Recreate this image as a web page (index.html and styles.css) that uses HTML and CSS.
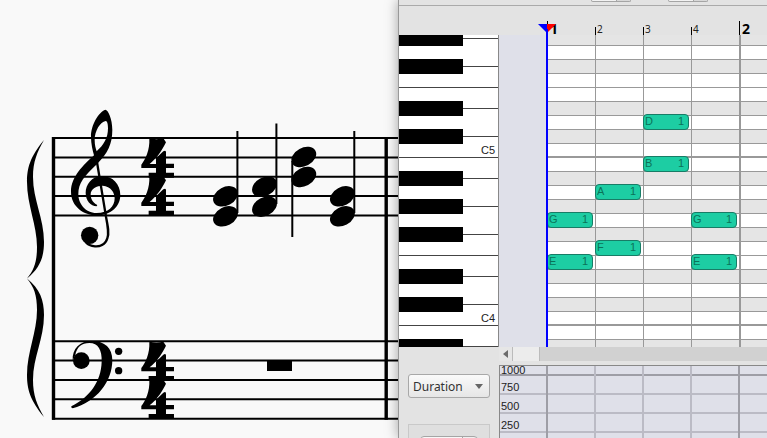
FILE: index.html
```html
<!DOCTYPE html>
<html lang="en">
<head>
  <meta charset="UTF-8" />
  <title>Score and Piano Roll</title>
  <link rel="stylesheet" href="styles.css">
</head>
<body>
  <main class="score">
    <svg class="sheet" width="399" height="438" viewBox="0 0 399 438" role="img" aria-label="Grand staff in 4/4">
      <defs>
        <path id="four" d="M448 145 Q470 150 490 145 L498 157 C490 174 474 202 449 222 H468 V205 L490 184 Q497 179 498 186 V221 H522 V234 H498 V248 H522 V263 H446 V248 H468 V234 H424 V224 C436 208 450 182 448 145 Z" />
        <ellipse id="head" rx="13.2" ry="9.2" transform="rotate(-28)" />
        <path id="half-brace" d="M44 140 C30 157 27 168 27 182 C27 205 37 225 37 247 C37 262 34 270 27 278.5 C40 268 44 257 44 242 C44 218 33 200 33 177 C33 162 37 152 44 140 Z" />
      </defs>

      <!-- staves -->
      <g stroke="#000" stroke-width="2">
        <path d="M52 138 H399 M52 157.4 H399 M52 176.7 H399 M52 196 H399 M52 215.5 H399" />
        <path d="M52 341.2 H399 M52 360.6 H399 M52 380 H399 M52 399.3 H399 M52 418.7 H399" />
      </g>
      <path d="M53.5 137 V419.7 M386.2 137 V419.7" stroke="#000" stroke-width="3.4" />

      <!-- brace -->
      <use href="#half-brace" />
      <use href="#half-brace" transform="translate(0 557) scale(1 -1)" />

      <!-- treble clef -->
      <g transform="translate(0 90) scale(.3333)">
        <path fill-rule="evenodd" d="M316 59 C297 66 273 103 273 140 C273 162 278 182 282 196 C250 226 213 260 213 305 C213 350 252 376 290 376 C335 376 361 348 361 315 C361 282 338 258 305 258 C275 258 257 285 257 308 C257 332 272 348 290 349 L292 345 C277 338 272 325 272 313 C272 297 290 287 308 287 C333 289 344 308 344 325 C344 350 325 369 290 369 C255 369 235 340 235 312 C235 280 252 258 292 221 C323 190 337 162 337 120 C337 86 324 59 316 59 Z M317 93 C301 96 284 122 284 150 C284 165 287 175 290 184 C311 165 324 145 324 115 C324 103 322 93 317 93 Z" />
        <path d="M290 210 L318 380 C324 410 328 430 322 445 C316 465 298 470 285 469 C272 468 262 462 256 455" fill="none" stroke="#000" stroke-width="7" />
        <circle cx="269" cy="436" r="26" />
      </g>

      <!-- bass clef -->
      <g transform="translate(0 250) scale(.3333)">
        <circle cx="244" cy="332" r="25" />
        <path d="M218 332 C216 295 240 273 275 273 C315 273 337 295 337 330 C337 395 290 455 218 475 Q212 473 214 469 C270 440 303 395 305 335 C306 300 295 279 268 279 C245 279 230 292 226 315 Z" />
        <circle cx="356" cy="304" r="11" />
        <circle cx="356" cy="362" r="11" />
      </g>

      <!-- time signatures -->
      <g transform="translate(0 90) scale(.3333)">
        <use href="#four" />
        <use href="#four" y="114" />
        <use href="#four" y="610" />
        <use href="#four" y="724" />
      </g>

      <!-- chords -->
      <use href="#head" transform="translate(225.5 196.3)" />
      <use href="#head" transform="translate(225.5 216.3)" />
      <use href="#head" transform="translate(264.5 186.7)" />
      <use href="#head" transform="translate(264.5 206.7)" />
      <use href="#head" transform="translate(303.8 157)" />
      <use href="#head" transform="translate(303.8 177)" />
      <use href="#head" transform="translate(342.4 196.3)" />
      <use href="#head" transform="translate(342.4 216.3)" />
      <path d="M237.4 131 V213 M276.4 123.5 V204 M292.3 161 V237 M354.3 131 V213" stroke="#000" stroke-width="2" />

      <!-- whole rest -->
      <rect x="267" y="360.5" width="25" height="10.5" />
    </svg>
  </main>

  <section class="editor">
    <div class="toolbar">
      <button class="tool" aria-label="Velocity"></button>
      <button class="tool" aria-label="Tick"></button>
    </div>

    <div class="ruler">
      <div class="beat bar">1</div>
      <div class="beat">2</div>
      <div class="beat">3</div>
      <div class="beat">4</div>
      <div class="beat bar">2</div>
      <svg class="marker" width="18" height="14" viewBox="0 0 18 14">
        <path d="M0 3 H9 V12 Z" fill="#00f" />
        <path d="M18 3 H9 V12 Z" fill="#f00" />
        <path d="M9 8 V14" stroke="#00f" stroke-width="2" />
      </svg>
    </div>

    <div class="roll">
      <div class="keyboard">
        <div class="key cut sharp"></div>
        <div class="key wide sharp"></div>
        <div class="key"></div>
        <div class="key sharp"></div>
        <div class="key wide sharp"></div>
        <div class="key">C5</div>
        <div class="key sharp"></div>
        <div class="key wide sharp"></div>
        <div class="key wide sharp"></div>
        <div class="key"></div>
        <div class="key sharp"></div>
        <div class="key wide sharp"></div>
        <div class="key">C4</div>
        <div class="key sharp"></div>
      </div>
      <div class="margin"></div>
      <div class="grid">
        <div class="lanes">
          <div class="lane black cut"></div>
          <div class="lane"></div>
          <div class="lane black"></div>
          <div class="lane"></div>
          <div class="lane"></div>
          <div class="lane black"></div>
          <div class="lane"></div>
          <div class="lane black"></div>
          <div class="lane octave"></div>
          <div class="lane"></div>
          <div class="lane black"></div>
          <div class="lane"></div>
          <div class="lane black"></div>
          <div class="lane"></div>
          <div class="lane black"></div>
          <div class="lane"></div>
          <div class="lane"></div>
          <div class="lane black"></div>
          <div class="lane"></div>
          <div class="lane black"></div>
          <div class="lane octave"></div>
          <div class="lane"></div>
          <div class="lane black"></div>
        </div>
        <div class="columns">
          <div class="column playhead"></div>
          <div class="column"></div>
          <div class="column"></div>
          <div class="column"></div>
          <div class="column bar"></div>
        </div>
        <div class="notes">
          <div class="note beat1 row-g"><span>G</span><span>1</span></div>
          <div class="note beat1 row-e"><span>E</span><span>1</span></div>
          <div class="note beat2 row-a"><span>A</span><span>1</span></div>
          <div class="note beat2 row-f"><span>F</span><span>1</span></div>
          <div class="note beat3 row-d"><span>D</span><span>1</span></div>
          <div class="note beat3 row-b"><span>B</span><span>1</span></div>
          <div class="note beat4 row-g"><span>G</span><span>1</span></div>
          <div class="note beat4 row-e"><span>E</span><span>1</span></div>
        </div>
      </div>
    </div>

    <div class="lower">
      <div class="controls">
        <div class="picker">
          <select class="level" aria-label="Level type">
            <option>Duration</option>
            <option>Velocity</option>
          </select>
        </div>
        <div class="group">
          <button class="tool" aria-label="Value"></button>
        </div>
      </div>
      <div class="levels">
        <div class="scrollbar">
          <button class="arrow" aria-label="Scroll left">
            <svg width="6" height="8" viewBox="0 0 6 8"><path d="M5 0 V8 L0 4 Z" fill="#6b6b6b" /></svg>
          </button>
          <div class="thumb"></div>
        </div>
        <div class="graph">
          <div class="columns">
            <div class="column bar"></div>
            <div class="column"></div>
            <div class="column"></div>
            <div class="column"></div>
            <div class="column bar"></div>
          </div>
          <div class="level-row top">1000</div>
          <div class="level-row">750</div>
          <div class="level-row">500</div>
          <div class="level-row">250</div>
        </div>
      </div>
    </div>
  </section>
</body>
</html>
```

FILE: styles.css
```css
* {
  box-sizing: border-box;
}
body {
  margin: 0;
  height: 100vh;
  display: flex;
  overflow: hidden;
  font-family: "Noto Sans", "Open Sans", sans-serif;
  font-size: 12px;
  background: #f9f9f9;
  color: #222;
}
button {
  padding: 0;
  margin: 0;
}
.score {
  flex: 1 1 398px;
  min-width: 0;
  overflow: hidden;
}
.sheet {
  display: block;
}

/* piano roll window */
.editor {
  flex: 1 1 369px;
  min-width: 0;
  display: flex;
  flex-direction: column;
  position: relative;
  border-left: 1px solid #999;
  background: #e3e3e3;
  box-shadow: 0 0 12px rgba(0, 0, 0, 0.35);
}
.toolbar {
  height: 6px;
  flex: none;
  display: flex;
  align-items: flex-start;
  gap: 37px;
  padding-left: 192px;
  border-bottom: 1px solid #aaa;
}
.tool {
  width: 40px;
  height: 2px;
  border: 1px solid #a5a5a5;
  border-top: none;
  border-radius: 0 0 4px 4px;
  background: linear-gradient(to right, #f2f2f2 24px, #a5a5a5 24px, #a5a5a5 25px, #d8d8d8 25px);
}
.ruler {
  position: relative;
  flex: none;
  height: 29px;
  display: flex;
  align-items: flex-end;
  padding-left: 148px;
}
.beat {
  flex: none;
  width: 48px;
  height: 14px;
  padding-left: 2px;
  background: linear-gradient(#000, #000) 0 100% / 1px 8px no-repeat;
  font-size: 10px;
  line-height: 16px;
}
.beat.bar {
  height: 20px;
  padding-left: 3px;
  background-size: 1px 14px;
  font-size: 14px;
  font-weight: 700;
  line-height: 28px;
  color: #000;
}
.marker {
  position: absolute;
  left: 139px;
  top: 15px;
}

.roll {
  flex: 1;
  min-height: 0;
  display: flex;
  overflow: hidden;
}
.keyboard {
  flex: none;
  width: 100px;
  background: #fff;
  border-right: 1px solid #888;
}
.key {
  position: relative;
  height: 21px;
  padding: 0 3px 1px 0;
  border-bottom: 1px solid #444;
  font: 11px/12px "Liberation Sans", Arial, sans-serif;
  display: flex;
  align-items: flex-end;
  justify-content: flex-end;
}
.key.wide {
  height: 28px;
}
.key.cut {
  height: 4px;
}
.key.sharp::after {
  content: "";
  position: absolute;
  z-index: 1;
  left: 0;
  bottom: -8px;
  width: 64px;
  height: 15px;
  background: #000;
}
.margin {
  flex: none;
  width: 47px;
  background: #dfe0e9;
}
.grid {
  position: relative;
  flex: 1;
}
.lane {
  height: 14px;
  background: #fff;
  border-bottom: 1px solid #999;
}
.lane.black {
  background: #e5e5e5;
}
.lane.cut {
  height: 11px;
}
.lane.octave {
  border-bottom-width: 2px;
}
.columns {
  position: absolute;
  inset: 0;
  display: flex;
  overflow: hidden;
}
.column {
  flex: none;
  width: 48px;
  border-left: 1px solid #999;
}
.column.bar {
  border-left: 2px solid #999;
}
.column.playhead {
  position: relative;
  z-index: 1;
  width: 49px;
  border-left: 2px solid #00f;
}
.notes {
  position: absolute;
  inset: 11px 0 0 1px;
  display: grid;
  grid-template-columns: repeat(5, 48px);
  grid-template-rows: repeat(22, 14px);
}
.note {
  width: 46px;
  height: 16px;
  margin-top: -2px;
  padding: 0 4px 0 1px;
  display: flex;
  justify-content: space-between;
  border: 1px solid #187c66;
  border-radius: 4px;
  background: #1dcda3;
  color: #0b7359;
  font: 11px/13px "Liberation Sans", Arial, sans-serif;
}
.beat1 {
  grid-column: 1;
}
.beat2 {
  grid-column: 2;
}
.beat3 {
  grid-column: 3;
}
.beat4 {
  grid-column: 4;
}
.row-d {
  grid-row: 6;
}
.row-b {
  grid-row: 9;
}
.row-a {
  grid-row: 11;
}
.row-g {
  grid-row: 13;
}
.row-f {
  grid-row: 15;
}
.row-e {
  grid-row: 16;
}

/* level editor under the roll */
.lower {
  flex: none;
  height: 91px;
  display: flex;
}
.controls {
  flex: none;
  width: 100px;
  padding: 27px 9px 0;
  display: flex;
  flex-direction: column;
  gap: 26px;
  overflow: hidden;
}
.picker {
  position: relative;
}
.picker::after {
  content: "";
  position: absolute;
  right: 7px;
  top: 10px;
  border: 4px solid transparent;
  border-top: 5px solid #666;
  border-bottom: none;
  pointer-events: none;
}
.level {
  appearance: none;
  display: block;
  width: 100%;
  height: 24px;
  padding: 0 4px;
  border: 1px solid #a8a8a8;
  border-radius: 3px;
  background: linear-gradient(#fafafa, #e6e6e6);
  color: #333;
  font: 12px "Noto Sans", "Open Sans", sans-serif;
}
.group {
  flex: none;
  height: 40px;
  padding: 11px 11px 0;
  border: 1px solid #c9c9c9;
  background: #dfdfdf;
}
.group .tool {
  display: block;
  width: 58px;
  height: 20px;
  border: 1px solid #a5a5a5;
  border-radius: 4px;
  background: linear-gradient(to right, #f8f8f8 41px, #a5a5a5 41px, #a5a5a5 42px, #f0f0f0 42px);
}
.levels {
  flex: 1;
  min-width: 0;
  display: flex;
  flex-direction: column;
  gap: 4px;
}
.scrollbar {
  flex: none;
  height: 14px;
  display: flex;
  background: #d1d1d1;
}
.arrow {
  width: 14px;
  display: flex;
  align-items: center;
  justify-content: center;
  border: none;
  border-right: 1px solid #bbb;
  background: #e6e6e6;
}
.thumb {
  width: 27px;
  background: #ececec;
  border-right: 1px solid #bbb;
}
.graph {
  position: relative;
  flex: 1;
  border: 1px solid #888;
  border-width: 1px 0 0 1px;
  background: #dfe0e9;
}
.graph .columns {
  padding-left: 46px;
}
.graph .column {
  border-left: 2px solid #bbbbc5;
}
.graph .column.bar {
  border-left-color: #9e9ea6;
}
.level-row {
  height: 19px;
  padding-left: 1px;
  display: flex;
  align-items: flex-end;
  border-bottom: 2px solid #bbbbc5;
  font: 11px/11px "Liberation Sans", Arial, sans-serif;
}
.level-row.top {
  height: 10px;
  align-items: flex-start;
  line-height: 9px;
  border-bottom-color: #9e9ea6;
}
```
